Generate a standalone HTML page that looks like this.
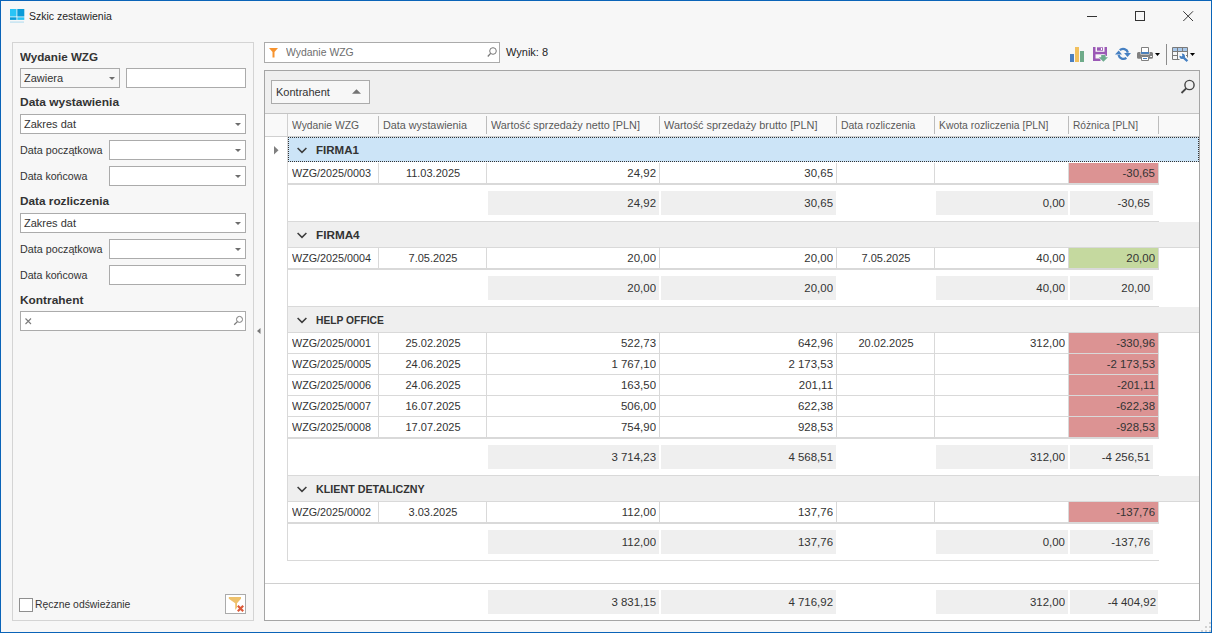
<!DOCTYPE html><html><head><meta charset="utf-8"><style>
html,body{margin:0;padding:0;}
body{width:1212px;height:633px;position:relative;overflow:hidden;background:#f7f7f7;font-family:"Liberation Sans",sans-serif;}
body div{position:absolute;box-sizing:border-box;}
.t{white-space:nowrap;line-height:14px;height:14px;}
svg{position:absolute;}
</style></head><body>
<div style="left:0px;top:0px;width:1212px;height:633px;border:1px solid #0a64b8;"></div>
<svg style="left:9px;top:8px" width="17" height="17"><rect x="1" y="1" width="6.5" height="7.5" fill="#29c4f6"/><rect x="8.3" y="1" width="7" height="7.5" fill="#0a9bd8"/><rect x="1" y="9.3" width="6.5" height="2.6" fill="#0a9bd8"/><rect x="8.3" y="9.3" width="7" height="2.6" fill="#29c4f6"/><rect x="1" y="13.5" width="14" height="1.2" fill="#b9def0"/></svg>
<div class="t" style="left:29px;top:9px;font-size:10.5px;color:#1e1e1e;">Szkic zestawienia</div>
<div style="left:1087px;top:16px;width:10px;height:1px;background:#333;"></div>
<div style="left:1135px;top:11px;width:10px;height:10px;border:1px solid #333;"></div>
<svg style="left:1183px;top:11px" width="11" height="11"><path d="M0.3 0.3L10 10M10 0.3L0.3 10" stroke="#3a3a3a" stroke-width="1"/></svg>
<div style="left:12px;top:42px;width:242px;height:579px;border:1px solid #d4d4d4;"></div>
<div class="t" style="left:20px;top:50px;font-size:11.5px;color:#333;font-weight:bold;transform:scaleX(1.012);transform-origin:left center;">Wydanie WZG</div>
<div style="left:20px;top:68px;width:100px;height:20px;border:1px solid #ababab;background:#f7f7f7;"></div>
<div class="t" style="left:24px;top:71px;font-size:11px;color:#333333;">Zawiera</div>
<svg style="left:109px;top:77px" width="6" height="3"><path d="M0 0H6L3 3Z" fill="#6d6d6d"/></svg>
<div style="left:126px;top:68px;width:120px;height:20px;border:1px solid #ababab;background:#fff;"></div>
<div class="t" style="left:20px;top:95px;font-size:11.5px;color:#333;font-weight:bold;transform:scaleX(1.04);transform-origin:left center;">Data wystawienia</div>
<div style="left:20px;top:114px;width:226px;height:20px;border:1px solid #ababab;background:#fff;"></div>
<div class="t" style="left:24px;top:117px;font-size:11px;color:#333333;">Zakres dat</div>
<svg style="left:235px;top:123px" width="6" height="3"><path d="M0 0H6L3 3Z" fill="#6d6d6d"/></svg>
<div class="t" style="left:20px;top:143px;font-size:11px;color:#333;transform:scaleX(0.977);transform-origin:left center;">Data początkowa</div>
<div style="left:109px;top:140px;width:137px;height:20px;border:1px solid #ababab;background:#fff;"></div>
<svg style="left:235px;top:149px" width="6" height="3"><path d="M0 0H6L3 3Z" fill="#6d6d6d"/></svg>
<div class="t" style="left:20px;top:169px;font-size:11px;color:#333;transform:scaleX(0.966);transform-origin:left center;">Data końcowa</div>
<div style="left:109px;top:166px;width:137px;height:20px;border:1px solid #ababab;background:#fff;"></div>
<svg style="left:235px;top:175px" width="6" height="3"><path d="M0 0H6L3 3Z" fill="#6d6d6d"/></svg>
<div class="t" style="left:20px;top:194px;font-size:11.5px;color:#333;font-weight:bold;transform:scaleX(1.024);transform-origin:left center;">Data rozliczenia</div>
<div style="left:20px;top:213px;width:226px;height:20px;border:1px solid #ababab;background:#fff;"></div>
<div class="t" style="left:24px;top:216px;font-size:11px;color:#333333;">Zakres dat</div>
<svg style="left:235px;top:222px" width="6" height="3"><path d="M0 0H6L3 3Z" fill="#6d6d6d"/></svg>
<div class="t" style="left:20px;top:242px;font-size:11px;color:#333;transform:scaleX(0.977);transform-origin:left center;">Data początkowa</div>
<div style="left:109px;top:239px;width:137px;height:20px;border:1px solid #ababab;background:#fff;"></div>
<svg style="left:235px;top:248px" width="6" height="3"><path d="M0 0H6L3 3Z" fill="#6d6d6d"/></svg>
<div class="t" style="left:20px;top:268px;font-size:11px;color:#333;transform:scaleX(0.966);transform-origin:left center;">Data końcowa</div>
<div style="left:109px;top:265px;width:137px;height:20px;border:1px solid #ababab;background:#fff;"></div>
<svg style="left:235px;top:274px" width="6" height="3"><path d="M0 0H6L3 3Z" fill="#6d6d6d"/></svg>
<div class="t" style="left:20px;top:293px;font-size:11.5px;color:#333;font-weight:bold;transform:scaleX(1.033);transform-origin:left center;">Kontrahent</div>
<div style="left:20px;top:311px;width:226px;height:20px;border:1px solid #ababab;background:#fff;"></div>
<svg style="left:25px;top:318px" width="7" height="7"><path d="M0.5 0.5L6 6M6 0.5L0.5 6" stroke="#7a7a7a" stroke-width="1.1"/></svg>
<svg style="left:233px;top:315px" width="11" height="11"><circle cx="6.5" cy="4.4" r="3" fill="none" stroke="#7a7a7a" stroke-width="1"/><path d="M4.4 6.6L1.2 9.8" stroke="#7a7a7a" stroke-width="1.3"/></svg>
<div style="left:19px;top:598px;width:14px;height:14px;border:1px solid #8f8f8f;background:#fff;"></div>
<div class="t" style="left:35px;top:598px;font-size:10.4px;color:#333;">Ręczne odświeżanie</div>
<div style="left:225px;top:594px;width:21px;height:20px;border:1px solid #ababab;background:#fff;"></div>
<svg style="left:227px;top:596px" width="18" height="16"><path d="M1.8 1H14V2.8L10 7.3V11.8L8.2 14V7.3L1.8 2.8Z" fill="#eec16b"/><path d="M10.8 9.8L16.2 15.2M16.2 9.8L10.8 15.2" stroke="#dd5a3a" stroke-width="2.2"/></svg>
<svg style="left:257px;top:328px" width="4" height="6"><path d="M3.5 0V6L0 3Z" fill="#777"/></svg>
<div style="left:264px;top:42px;width:236px;height:21px;border:1px solid #ababab;background:#fff;"></div>
<svg style="left:269px;top:48px" width="9" height="10"><path d="M0 0H9L5.5 4V9.5L3.5 9.5V4Z" fill="#f7932e"/></svg>
<div class="t" style="left:286px;top:45px;font-size:11px;color:#6e6e6e;transform:scaleX(0.948);transform-origin:left center;">Wydanie WZG</div>
<svg style="left:487px;top:47px" width="10" height="10"><circle cx="6" cy="4" r="3.3" fill="none" stroke="#777" stroke-width="1"/><path d="M3.6 6.4L0.8 9.5" stroke="#777" stroke-width="1.3"/></svg>
<div class="t" style="left:506px;top:45px;font-size:11px;color:#1e1e1e;">Wynik: 8</div>
<div style="left:1070px;top:54px;width:4px;height:8px;background:#4a7fc1;"></div>
<div style="left:1075px;top:47px;width:4px;height:15px;background:#f1c05e;"></div>
<div style="left:1080px;top:51px;width:4px;height:11px;background:#6fab8a;"></div>
<svg style="left:1093px;top:47px" width="16" height="16"><path d="M0 0H2.5V11.5H7.5V14H0Z" fill="#9b59b6"/><path d="M0 4.8H14V7.3H0Z" fill="#9b59b6"/><path d="M11.5 0H14V9H11.5Z" fill="#9b59b6"/><path d="M4 0.3H10V3.7H4Z" fill="#9b59b6"/><path d="M7.9 1H9.1V3H7.9Z" fill="#fff"/><path d="M8.2 8H12.6V10.2H15L10.4 14.8L5.8 10.2H8.2Z" fill="#6fab8f" stroke="#f7f7f7" stroke-width="0.8" paint-order="stroke"/></svg>
<svg style="left:1115px;top:47px" width="17" height="14"><path d="M4.8 3.2A4.9 4.9 0 0 1 12.9 5.6" fill="none" stroke="#4680c2" stroke-width="2.3"/><path d="M9.1 6.1H16L12.5 10.1Z" fill="#4680c2"/><path d="M11.4 10.9A4.9 4.9 0 0 1 3.6 8" fill="none" stroke="#4680c2" stroke-width="2.3"/><path d="M0 7.5H7L3.7 3.5Z" fill="#4680c2"/></svg>
<svg style="left:1137px;top:47px" width="24" height="15"><path d="M4.5 0.5H11.5V6.5H4.5Z" fill="#fff" stroke="#808080" stroke-width="1"/><path d="M4 5H12V6.8H4Z" fill="#4680c2"/><path d="M1.5 5H3.5V7.5H12.5V5H14.5Q16 5 16 6.5V10.5Q16 11.7 14.5 11.7H12V9.5H4V11.7H1.5Q0 11.7 0 10.5V6.5Q0 5 1.5 5Z" fill="#808080"/><path d="M13.2 8.9H15V9.9H13.2Z" fill="#fff"/><path d="M4.5 9.5H11.5V13.5H4.5Z" fill="#fff" stroke="#808080" stroke-width="1"/><path d="M6 11H10V12H6Z" fill="#4680c2"/><path d="M18 6H23L20.5 9Z" fill="#000"/></svg>
<div style="left:1166px;top:44px;width:1px;height:21px;background:#8c8c8c;"></div>
<svg style="left:1172px;top:47px" width="24" height="16"><path d="M0.5 0.5H15.5V4.5H0.5Z" fill="#a7c7ea"/><path d="M7.5 12.5H0.5V0.5H15.5V10.5" fill="none" stroke="#7a7a7a"/><path d="M0.5 4.5H15.5M0.5 8.5H5.5M14 8.5H15.5M5.5 0.5V12.5M10.5 0.5V4.5" stroke="#7a7a7a"/><g fill="#fff" stroke="#fff" stroke-width="1.4"><path d="M7.5 8.6A2.8 2.8 0 1 0 9.67 6.55L10.5 8.7L9.7 9.5Z"/><path d="M10.2 9.3L15.4 14.2" stroke-width="3.6"/></g><g fill="#4680c2"><path d="M7.5 8.6A2.8 2.8 0 1 0 9.67 6.55L10.5 8.7L9.7 9.5Z"/><path d="M10.2 9.3L15.4 14.2" stroke="#4680c2" stroke-width="2.4"/></g><path d="M18 6H23L20.5 9Z" fill="#000"/></svg>
<div style="left:264px;top:70px;width:936px;height:551px;border:1px solid #a5a5a5;background:#fff;"></div>
<div style="left:265px;top:71px;width:934px;height:43px;background:#efefef;border-bottom:1px solid #c4c4c4;"></div>
<div style="left:271px;top:80px;width:99px;height:24px;border:1px solid #ababab;background:#f7f7f7;"></div>
<div class="t" style="left:276px;top:85px;font-size:11px;color:#333;">Kontrahent</div>
<svg style="left:352px;top:89px" width="9" height="5"><path d="M0 4.8H9L4.5 0.3Z" fill="#747474"/></svg>
<svg style="left:1180px;top:79px" width="16" height="16"><circle cx="9.5" cy="6" r="4.6" fill="none" stroke="#444" stroke-width="1.4"/><path d="M6.2 9.3L1.5 14" stroke="#444" stroke-width="1.8"/></svg>
<div style="left:265px;top:114px;width:934px;height:23px;background:#f9f9f9;border-bottom:1px solid #d0d0d0;"></div>
<div style="left:287px;top:114px;width:1px;height:23px;background:#d0d0d0;"></div>
<div class="t" style="left:292px;top:118px;font-size:11px;color:#5a5a5a;transform:scaleX(0.938);transform-origin:left center;">Wydanie WZG</div>
<div style="left:378px;top:116px;width:1px;height:18px;background:#bdbdbd;"></div>
<div class="t" style="left:383px;top:118px;font-size:11px;color:#5a5a5a;transform:scaleX(0.981);transform-origin:left center;">Data wystawienia</div>
<div style="left:486px;top:116px;width:1px;height:18px;background:#bdbdbd;"></div>
<div class="t" style="left:491px;top:118px;font-size:11px;color:#5a5a5a;transform:scaleX(0.985);transform-origin:left center;">Wartość sprzedaży netto [PLN]</div>
<div style="left:659px;top:116px;width:1px;height:18px;background:#bdbdbd;"></div>
<div class="t" style="left:664px;top:118px;font-size:11px;color:#5a5a5a;transform:scaleX(0.991);transform-origin:left center;">Wartość sprzedaży brutto [PLN]</div>
<div style="left:836px;top:116px;width:1px;height:18px;background:#bdbdbd;"></div>
<div class="t" style="left:841px;top:118px;font-size:11px;color:#5a5a5a;transform:scaleX(0.951);transform-origin:left center;">Data rozliczenia</div>
<div style="left:934px;top:116px;width:1px;height:18px;background:#bdbdbd;"></div>
<div class="t" style="left:939px;top:118px;font-size:11px;color:#5a5a5a;transform:scaleX(0.942);transform-origin:left center;">Kwota rozliczenia [PLN]</div>
<div style="left:1068px;top:116px;width:1px;height:18px;background:#bdbdbd;"></div>
<div class="t" style="left:1073px;top:118px;font-size:11px;color:#5a5a5a;transform:scaleX(0.925);transform-origin:left center;">Różnica [PLN]</div>
<div style="left:1158px;top:116px;width:1px;height:18px;background:#bdbdbd;"></div>
<div style="left:287px;top:137px;width:1px;height:424px;background:#d9d9d9;"></div>
<div style="left:288px;top:137px;width:911px;height:25px;background:#cce4f7;border:1px dotted #333;"></div>
<svg style="left:297px;top:147px" width="11" height="7"><path d="M0.6 1L5 5.4L9.4 1" fill="none" stroke="#3b3b3b" stroke-width="1.5"/></svg>
<div class="t" style="left:316px;top:143px;font-size:11px;color:#333;font-weight:bold;transform:scaleX(1.049);transform-origin:left center;">FIRMA1</div>
<svg style="left:274px;top:146px" width="5" height="9"><path d="M0 0V8.5L4.5 4.25Z" fill="#808080"/></svg>
<div style="left:378px;top:163px;width:1px;height:20px;background:#d9d9d9;"></div>
<div style="left:486px;top:163px;width:1px;height:20px;background:#d9d9d9;"></div>
<div style="left:659px;top:163px;width:1px;height:20px;background:#d9d9d9;"></div>
<div style="left:836px;top:163px;width:1px;height:20px;background:#d9d9d9;"></div>
<div style="left:934px;top:163px;width:1px;height:20px;background:#d9d9d9;"></div>
<div style="left:1068px;top:163px;width:1px;height:20px;background:#d9d9d9;"></div>
<div style="left:1158px;top:163px;width:1px;height:20px;background:#d9d9d9;"></div>
<div style="left:1069px;top:163px;width:89px;height:20px;background:#dc9393;"></div>
<div style="left:288px;top:183px;width:871px;height:2px;background:#d9d9d9;"></div>
<div class="t" style="left:292px;top:166px;font-size:11px;color:#333333;transform:scaleX(0.979);transform-origin:left center;">WZG/2025/0003</div>
<div class="t" style="left:380px;width:106px;text-align:center;top:166px;font-size:11px;color:#333333;">11.03.2025</div>
<div class="t" style="left:356px;width:300px;text-align:right;top:166px;font-size:11px;color:#333333;transform:scaleX(1.04);transform-origin:right center;">24,92</div>
<div class="t" style="left:533px;width:300px;text-align:right;top:166px;font-size:11px;color:#333333;transform:scaleX(1.04);transform-origin:right center;">30,65</div>
<div class="t" style="left:855px;width:300px;text-align:right;top:166px;font-size:11px;color:#333333;transform:scaleX(1.04);transform-origin:right center;">-30,65</div>
<div style="left:488px;top:191px;width:171px;height:24px;background:#efefef;"></div>
<div style="left:661px;top:191px;width:175px;height:24px;background:#efefef;"></div>
<div style="left:936px;top:191px;width:132px;height:24px;background:#efefef;"></div>
<div style="left:1070px;top:191px;width:83px;height:24px;background:#efefef;"></div>
<div class="t" style="left:356px;width:300px;text-align:right;top:196px;font-size:11px;color:#333333;transform:scaleX(1.04);transform-origin:right center;">24,92</div>
<div class="t" style="left:533px;width:300px;text-align:right;top:196px;font-size:11px;color:#333333;transform:scaleX(1.04);transform-origin:right center;">30,65</div>
<div class="t" style="left:765px;width:300px;text-align:right;top:196px;font-size:11px;color:#333333;transform:scaleX(1.04);transform-origin:right center;">0,00</div>
<div class="t" style="left:850px;width:300px;text-align:right;top:196px;font-size:11px;color:#333333;transform:scaleX(1.04);transform-origin:right center;">-30,65</div>
<div style="left:288px;top:221px;width:871px;height:1px;background:#d9d9d9;"></div>
<div style="left:288px;top:222px;width:911px;height:25px;background:#efefef;"></div>
<div style="left:288px;top:247px;width:911px;height:1px;background:#d9d9d9;"></div>
<svg style="left:297px;top:232px" width="11" height="7"><path d="M0.6 1L5 5.4L9.4 1" fill="none" stroke="#3b3b3b" stroke-width="1.5"/></svg>
<div class="t" style="left:316px;top:228px;font-size:11px;color:#333;font-weight:bold;transform:scaleX(1.066);transform-origin:left center;">FIRMA4</div>
<div style="left:378px;top:248px;width:1px;height:20px;background:#d9d9d9;"></div>
<div style="left:486px;top:248px;width:1px;height:20px;background:#d9d9d9;"></div>
<div style="left:659px;top:248px;width:1px;height:20px;background:#d9d9d9;"></div>
<div style="left:836px;top:248px;width:1px;height:20px;background:#d9d9d9;"></div>
<div style="left:934px;top:248px;width:1px;height:20px;background:#d9d9d9;"></div>
<div style="left:1068px;top:248px;width:1px;height:20px;background:#d9d9d9;"></div>
<div style="left:1158px;top:248px;width:1px;height:20px;background:#d9d9d9;"></div>
<div style="left:1069px;top:248px;width:89px;height:20px;background:#c5d99f;"></div>
<div style="left:288px;top:268px;width:871px;height:2px;background:#d9d9d9;"></div>
<div class="t" style="left:292px;top:251px;font-size:11px;color:#333333;transform:scaleX(0.979);transform-origin:left center;">WZG/2025/0004</div>
<div class="t" style="left:380px;width:106px;text-align:center;top:251px;font-size:11px;color:#333333;">7.05.2025</div>
<div class="t" style="left:356px;width:300px;text-align:right;top:251px;font-size:11px;color:#333333;transform:scaleX(1.04);transform-origin:right center;">20,00</div>
<div class="t" style="left:533px;width:300px;text-align:right;top:251px;font-size:11px;color:#333333;transform:scaleX(1.04);transform-origin:right center;">20,00</div>
<div class="t" style="left:838px;width:96px;text-align:center;top:251px;font-size:11px;color:#333333;">7.05.2025</div>
<div class="t" style="left:765px;width:300px;text-align:right;top:251px;font-size:11px;color:#333333;transform:scaleX(1.04);transform-origin:right center;">40,00</div>
<div class="t" style="left:855px;width:300px;text-align:right;top:251px;font-size:11px;color:#333333;transform:scaleX(1.04);transform-origin:right center;">20,00</div>
<div style="left:488px;top:276px;width:171px;height:24px;background:#efefef;"></div>
<div style="left:661px;top:276px;width:175px;height:24px;background:#efefef;"></div>
<div style="left:936px;top:276px;width:132px;height:24px;background:#efefef;"></div>
<div style="left:1070px;top:276px;width:83px;height:24px;background:#efefef;"></div>
<div class="t" style="left:356px;width:300px;text-align:right;top:281px;font-size:11px;color:#333333;transform:scaleX(1.04);transform-origin:right center;">20,00</div>
<div class="t" style="left:533px;width:300px;text-align:right;top:281px;font-size:11px;color:#333333;transform:scaleX(1.04);transform-origin:right center;">20,00</div>
<div class="t" style="left:765px;width:300px;text-align:right;top:281px;font-size:11px;color:#333333;transform:scaleX(1.04);transform-origin:right center;">40,00</div>
<div class="t" style="left:850px;width:300px;text-align:right;top:281px;font-size:11px;color:#333333;transform:scaleX(1.04);transform-origin:right center;">20,00</div>
<div style="left:288px;top:306px;width:871px;height:1px;background:#d9d9d9;"></div>
<div style="left:288px;top:307px;width:911px;height:25px;background:#efefef;"></div>
<div style="left:288px;top:332px;width:911px;height:1px;background:#d9d9d9;"></div>
<svg style="left:297px;top:317px" width="11" height="7"><path d="M0.6 1L5 5.4L9.4 1" fill="none" stroke="#3b3b3b" stroke-width="1.5"/></svg>
<div class="t" style="left:316px;top:313px;font-size:11px;color:#333;font-weight:bold;transform:scaleX(0.935);transform-origin:left center;">HELP OFFICE</div>
<div style="left:378px;top:333px;width:1px;height:20px;background:#d9d9d9;"></div>
<div style="left:486px;top:333px;width:1px;height:20px;background:#d9d9d9;"></div>
<div style="left:659px;top:333px;width:1px;height:20px;background:#d9d9d9;"></div>
<div style="left:836px;top:333px;width:1px;height:20px;background:#d9d9d9;"></div>
<div style="left:934px;top:333px;width:1px;height:20px;background:#d9d9d9;"></div>
<div style="left:1068px;top:333px;width:1px;height:20px;background:#d9d9d9;"></div>
<div style="left:1158px;top:333px;width:1px;height:20px;background:#d9d9d9;"></div>
<div style="left:1069px;top:333px;width:89px;height:20px;background:#dc9393;"></div>
<div style="left:288px;top:353px;width:871px;height:1px;background:#d9d9d9;"></div>
<div class="t" style="left:292px;top:336px;font-size:11px;color:#333333;transform:scaleX(0.979);transform-origin:left center;">WZG/2025/0001</div>
<div class="t" style="left:380px;width:106px;text-align:center;top:336px;font-size:11px;color:#333333;">25.02.2025</div>
<div class="t" style="left:356px;width:300px;text-align:right;top:336px;font-size:11px;color:#333333;transform:scaleX(1.04);transform-origin:right center;">522,73</div>
<div class="t" style="left:533px;width:300px;text-align:right;top:336px;font-size:11px;color:#333333;transform:scaleX(1.04);transform-origin:right center;">642,96</div>
<div class="t" style="left:838px;width:96px;text-align:center;top:336px;font-size:11px;color:#333333;">20.02.2025</div>
<div class="t" style="left:765px;width:300px;text-align:right;top:336px;font-size:11px;color:#333333;transform:scaleX(1.04);transform-origin:right center;">312,00</div>
<div class="t" style="left:855px;width:300px;text-align:right;top:336px;font-size:11px;color:#333333;transform:scaleX(1.04);transform-origin:right center;">-330,96</div>
<div style="left:378px;top:354px;width:1px;height:20px;background:#d9d9d9;"></div>
<div style="left:486px;top:354px;width:1px;height:20px;background:#d9d9d9;"></div>
<div style="left:659px;top:354px;width:1px;height:20px;background:#d9d9d9;"></div>
<div style="left:836px;top:354px;width:1px;height:20px;background:#d9d9d9;"></div>
<div style="left:934px;top:354px;width:1px;height:20px;background:#d9d9d9;"></div>
<div style="left:1068px;top:354px;width:1px;height:20px;background:#d9d9d9;"></div>
<div style="left:1158px;top:354px;width:1px;height:20px;background:#d9d9d9;"></div>
<div style="left:1069px;top:354px;width:89px;height:20px;background:#dc9393;"></div>
<div style="left:288px;top:374px;width:871px;height:1px;background:#d9d9d9;"></div>
<div class="t" style="left:292px;top:357px;font-size:11px;color:#333333;transform:scaleX(0.979);transform-origin:left center;">WZG/2025/0005</div>
<div class="t" style="left:380px;width:106px;text-align:center;top:357px;font-size:11px;color:#333333;">24.06.2025</div>
<div class="t" style="left:356px;width:300px;text-align:right;top:357px;font-size:11px;color:#333333;transform:scaleX(1.04);transform-origin:right center;">1 767,10</div>
<div class="t" style="left:533px;width:300px;text-align:right;top:357px;font-size:11px;color:#333333;transform:scaleX(1.04);transform-origin:right center;">2 173,53</div>
<div class="t" style="left:855px;width:300px;text-align:right;top:357px;font-size:11px;color:#333333;transform:scaleX(1.04);transform-origin:right center;">-2 173,53</div>
<div style="left:378px;top:375px;width:1px;height:20px;background:#d9d9d9;"></div>
<div style="left:486px;top:375px;width:1px;height:20px;background:#d9d9d9;"></div>
<div style="left:659px;top:375px;width:1px;height:20px;background:#d9d9d9;"></div>
<div style="left:836px;top:375px;width:1px;height:20px;background:#d9d9d9;"></div>
<div style="left:934px;top:375px;width:1px;height:20px;background:#d9d9d9;"></div>
<div style="left:1068px;top:375px;width:1px;height:20px;background:#d9d9d9;"></div>
<div style="left:1158px;top:375px;width:1px;height:20px;background:#d9d9d9;"></div>
<div style="left:1069px;top:375px;width:89px;height:20px;background:#dc9393;"></div>
<div style="left:288px;top:395px;width:871px;height:1px;background:#d9d9d9;"></div>
<div class="t" style="left:292px;top:378px;font-size:11px;color:#333333;transform:scaleX(0.979);transform-origin:left center;">WZG/2025/0006</div>
<div class="t" style="left:380px;width:106px;text-align:center;top:378px;font-size:11px;color:#333333;">24.06.2025</div>
<div class="t" style="left:356px;width:300px;text-align:right;top:378px;font-size:11px;color:#333333;transform:scaleX(1.04);transform-origin:right center;">163,50</div>
<div class="t" style="left:533px;width:300px;text-align:right;top:378px;font-size:11px;color:#333333;transform:scaleX(1.04);transform-origin:right center;">201,11</div>
<div class="t" style="left:855px;width:300px;text-align:right;top:378px;font-size:11px;color:#333333;transform:scaleX(1.04);transform-origin:right center;">-201,11</div>
<div style="left:378px;top:396px;width:1px;height:20px;background:#d9d9d9;"></div>
<div style="left:486px;top:396px;width:1px;height:20px;background:#d9d9d9;"></div>
<div style="left:659px;top:396px;width:1px;height:20px;background:#d9d9d9;"></div>
<div style="left:836px;top:396px;width:1px;height:20px;background:#d9d9d9;"></div>
<div style="left:934px;top:396px;width:1px;height:20px;background:#d9d9d9;"></div>
<div style="left:1068px;top:396px;width:1px;height:20px;background:#d9d9d9;"></div>
<div style="left:1158px;top:396px;width:1px;height:20px;background:#d9d9d9;"></div>
<div style="left:1069px;top:396px;width:89px;height:20px;background:#dc9393;"></div>
<div style="left:288px;top:416px;width:871px;height:1px;background:#d9d9d9;"></div>
<div class="t" style="left:292px;top:399px;font-size:11px;color:#333333;transform:scaleX(0.979);transform-origin:left center;">WZG/2025/0007</div>
<div class="t" style="left:380px;width:106px;text-align:center;top:399px;font-size:11px;color:#333333;">16.07.2025</div>
<div class="t" style="left:356px;width:300px;text-align:right;top:399px;font-size:11px;color:#333333;transform:scaleX(1.04);transform-origin:right center;">506,00</div>
<div class="t" style="left:533px;width:300px;text-align:right;top:399px;font-size:11px;color:#333333;transform:scaleX(1.04);transform-origin:right center;">622,38</div>
<div class="t" style="left:855px;width:300px;text-align:right;top:399px;font-size:11px;color:#333333;transform:scaleX(1.04);transform-origin:right center;">-622,38</div>
<div style="left:378px;top:417px;width:1px;height:20px;background:#d9d9d9;"></div>
<div style="left:486px;top:417px;width:1px;height:20px;background:#d9d9d9;"></div>
<div style="left:659px;top:417px;width:1px;height:20px;background:#d9d9d9;"></div>
<div style="left:836px;top:417px;width:1px;height:20px;background:#d9d9d9;"></div>
<div style="left:934px;top:417px;width:1px;height:20px;background:#d9d9d9;"></div>
<div style="left:1068px;top:417px;width:1px;height:20px;background:#d9d9d9;"></div>
<div style="left:1158px;top:417px;width:1px;height:20px;background:#d9d9d9;"></div>
<div style="left:1069px;top:417px;width:89px;height:20px;background:#dc9393;"></div>
<div style="left:288px;top:437px;width:871px;height:2px;background:#d9d9d9;"></div>
<div class="t" style="left:292px;top:420px;font-size:11px;color:#333333;transform:scaleX(0.979);transform-origin:left center;">WZG/2025/0008</div>
<div class="t" style="left:380px;width:106px;text-align:center;top:420px;font-size:11px;color:#333333;">17.07.2025</div>
<div class="t" style="left:356px;width:300px;text-align:right;top:420px;font-size:11px;color:#333333;transform:scaleX(1.04);transform-origin:right center;">754,90</div>
<div class="t" style="left:533px;width:300px;text-align:right;top:420px;font-size:11px;color:#333333;transform:scaleX(1.04);transform-origin:right center;">928,53</div>
<div class="t" style="left:855px;width:300px;text-align:right;top:420px;font-size:11px;color:#333333;transform:scaleX(1.04);transform-origin:right center;">-928,53</div>
<div style="left:488px;top:445px;width:171px;height:24px;background:#efefef;"></div>
<div style="left:661px;top:445px;width:175px;height:24px;background:#efefef;"></div>
<div style="left:936px;top:445px;width:132px;height:24px;background:#efefef;"></div>
<div style="left:1070px;top:445px;width:83px;height:24px;background:#efefef;"></div>
<div class="t" style="left:356px;width:300px;text-align:right;top:450px;font-size:11px;color:#333333;transform:scaleX(1.04);transform-origin:right center;">3 714,23</div>
<div class="t" style="left:533px;width:300px;text-align:right;top:450px;font-size:11px;color:#333333;transform:scaleX(1.04);transform-origin:right center;">4 568,51</div>
<div class="t" style="left:765px;width:300px;text-align:right;top:450px;font-size:11px;color:#333333;transform:scaleX(1.04);transform-origin:right center;">312,00</div>
<div class="t" style="left:850px;width:300px;text-align:right;top:450px;font-size:11px;color:#333333;transform:scaleX(1.04);transform-origin:right center;">-4 256,51</div>
<div style="left:288px;top:475px;width:871px;height:1px;background:#d9d9d9;"></div>
<div style="left:288px;top:476px;width:911px;height:25px;background:#efefef;"></div>
<div style="left:288px;top:501px;width:911px;height:1px;background:#d9d9d9;"></div>
<svg style="left:297px;top:486px" width="11" height="7"><path d="M0.6 1L5 5.4L9.4 1" fill="none" stroke="#3b3b3b" stroke-width="1.5"/></svg>
<div class="t" style="left:316px;top:482px;font-size:11px;color:#333;font-weight:bold;transform:scaleX(0.974);transform-origin:left center;">KLIENT DETALICZNY</div>
<div style="left:378px;top:502px;width:1px;height:20px;background:#d9d9d9;"></div>
<div style="left:486px;top:502px;width:1px;height:20px;background:#d9d9d9;"></div>
<div style="left:659px;top:502px;width:1px;height:20px;background:#d9d9d9;"></div>
<div style="left:836px;top:502px;width:1px;height:20px;background:#d9d9d9;"></div>
<div style="left:934px;top:502px;width:1px;height:20px;background:#d9d9d9;"></div>
<div style="left:1068px;top:502px;width:1px;height:20px;background:#d9d9d9;"></div>
<div style="left:1158px;top:502px;width:1px;height:20px;background:#d9d9d9;"></div>
<div style="left:1069px;top:502px;width:89px;height:20px;background:#dc9393;"></div>
<div style="left:288px;top:522px;width:871px;height:2px;background:#d9d9d9;"></div>
<div class="t" style="left:292px;top:505px;font-size:11px;color:#333333;transform:scaleX(0.979);transform-origin:left center;">WZG/2025/0002</div>
<div class="t" style="left:380px;width:106px;text-align:center;top:505px;font-size:11px;color:#333333;">3.03.2025</div>
<div class="t" style="left:356px;width:300px;text-align:right;top:505px;font-size:11px;color:#333333;transform:scaleX(1.04);transform-origin:right center;">112,00</div>
<div class="t" style="left:533px;width:300px;text-align:right;top:505px;font-size:11px;color:#333333;transform:scaleX(1.04);transform-origin:right center;">137,76</div>
<div class="t" style="left:855px;width:300px;text-align:right;top:505px;font-size:11px;color:#333333;transform:scaleX(1.04);transform-origin:right center;">-137,76</div>
<div style="left:488px;top:530px;width:171px;height:24px;background:#efefef;"></div>
<div style="left:661px;top:530px;width:175px;height:24px;background:#efefef;"></div>
<div style="left:936px;top:530px;width:132px;height:24px;background:#efefef;"></div>
<div style="left:1070px;top:530px;width:83px;height:24px;background:#efefef;"></div>
<div class="t" style="left:356px;width:300px;text-align:right;top:535px;font-size:11px;color:#333333;transform:scaleX(1.04);transform-origin:right center;">112,00</div>
<div class="t" style="left:533px;width:300px;text-align:right;top:535px;font-size:11px;color:#333333;transform:scaleX(1.04);transform-origin:right center;">137,76</div>
<div class="t" style="left:765px;width:300px;text-align:right;top:535px;font-size:11px;color:#333333;transform:scaleX(1.04);transform-origin:right center;">0,00</div>
<div class="t" style="left:850px;width:300px;text-align:right;top:535px;font-size:11px;color:#333333;transform:scaleX(1.04);transform-origin:right center;">-137,76</div>
<div style="left:288px;top:560px;width:871px;height:1px;background:#d9d9d9;"></div>
<div style="left:265px;top:583px;width:934px;height:1px;background:#d0d0d0;"></div>
<div style="left:488px;top:590px;width:171px;height:24px;background:#efefef;"></div>
<div style="left:661px;top:590px;width:175px;height:24px;background:#efefef;"></div>
<div style="left:936px;top:590px;width:132px;height:24px;background:#efefef;"></div>
<div style="left:1070px;top:590px;width:88px;height:24px;background:#efefef;"></div>
<div class="t" style="left:356px;width:300px;text-align:right;top:595px;font-size:11px;color:#333333;transform:scaleX(1.04);transform-origin:right center;">3 831,15</div>
<div class="t" style="left:533px;width:300px;text-align:right;top:595px;font-size:11px;color:#333333;transform:scaleX(1.04);transform-origin:right center;">4 716,92</div>
<div class="t" style="left:765px;width:300px;text-align:right;top:595px;font-size:11px;color:#333333;transform:scaleX(1.04);transform-origin:right center;">312,00</div>
<div class="t" style="left:856px;width:300px;text-align:right;top:595px;font-size:11px;color:#333333;transform:scaleX(1.04);transform-origin:right center;">-4 404,92</div>
<div style="left:1209px;top:622px;width:2px;height:2px;background:#d2d2d2;"></div>
<div style="left:1209px;top:626px;width:2px;height:2px;background:#d2d2d2;"></div>
<div style="left:1205px;top:626px;width:2px;height:2px;background:#d2d2d2;"></div>
<div style="left:1209px;top:630px;width:2px;height:2px;background:#d2d2d2;"></div>
<div style="left:1205px;top:630px;width:2px;height:2px;background:#d2d2d2;"></div>
<div style="left:1201px;top:630px;width:2px;height:2px;background:#d2d2d2;"></div>
</body></html>
